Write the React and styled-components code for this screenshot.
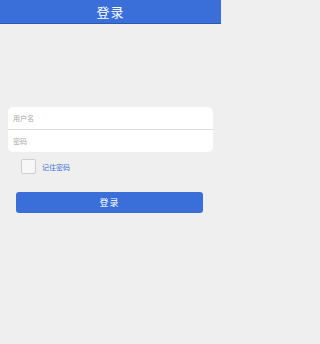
import React from 'react';
import styled, { createGlobalStyle } from 'styled-components';

const GlobalStyle = createGlobalStyle`
  html, body {
    margin: 0;
    padding: 0;
    background: #efefef;
    font-family: 'Noto Sans CJK SC', 'Noto Sans', sans-serif;
  }
  #root {
    width: 221px;
    min-height: 344px;
  }
`;

const Header = styled.header`
  height: 23px;
  background: #3a6fd9;
  border-bottom: 1px solid #2c58b4;
  display: flex;
  align-items: center;
  justify-content: center;
  color: #fff;
  font-size: 13px;
  letter-spacing: 1px;
`;

const Form = styled.form`
  display: flex;
  flex-direction: column;
  padding-top: 83px;
`;

const Card = styled.div`
  margin: 0 8px;
  background: #fff;
  border-radius: 5px;
  overflow: hidden;
  display: flex;
  flex-direction: column;
`;

const Field = styled.input`
  height: 22px;
  border: none;
  border-top: ${p => (p.$divided ? '1px solid #dcdcdc' : 'none')};
  padding: 0 5px;
  font-family: inherit;
  font-size: 7px;
  background: transparent;
  outline: none;
  &::placeholder {
    color: #a8a8a8;
  }
`;

const Remember = styled.label`
  display: flex;
  align-items: center;
  gap: 6px;
  margin: 7px 0 0 21px;
  font-size: 7px;
  color: #3a6fd9;
`;

const Box = styled.span`
  width: 13px;
  height: 13px;
  border: 1px solid #cfcfcf;
  border-radius: 2px;
  background: #f7f7f7;
`;

const Submit = styled.button`
  margin: 18px 18px 0 16px;
  height: 21px;
  border: none;
  border-radius: 3px;
  background: #3a6fd9;
  color: #fff;
  font-family: inherit;
  font-size: 9px;
  letter-spacing: 1px;
`;

export default function App() {
  return (
    <>
      <GlobalStyle />
      <Header>登录</Header>
      <Form onSubmit={e => e.preventDefault()}>
        <Card>
          <Field placeholder="用户名" />
          <Field $divided type="password" placeholder="密码" />
        </Card>
        <Remember>
          <Box />
          记住密码
        </Remember>
        <Submit type="submit">登录</Submit>
      </Form>
    </>
  );
}
